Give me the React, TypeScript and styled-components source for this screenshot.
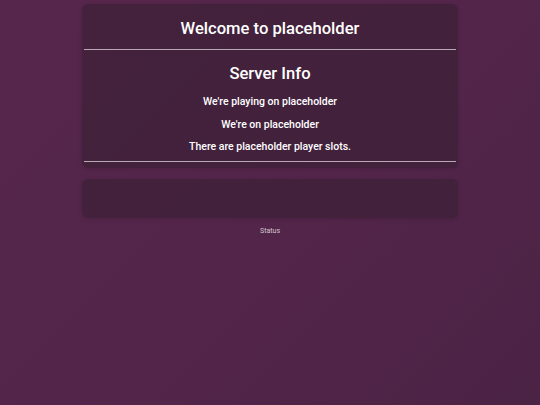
import React from "react";
import styled, { createGlobalStyle } from "styled-components";

const GlobalStyle = createGlobalStyle`
  html, body {
    margin: 0;
    padding: 0;
  }
  body {
    font-family: Roboto, "Open Sans", "DejaVu Sans", sans-serif;
    background: linear-gradient(135deg, #57264c 0%, #53254a 50%, #4b2345 100%);
    min-height: 405px;
    color: #ffffff;
  }
`;

const Page = styled.div`
  width: 376px;
  margin: 0 auto;
  padding-top: 4px;
  display: flex;
  flex-direction: column;
  gap: 11px;
`;

const Card = styled.section<{ $minHeight?: number }>`
  background: rgba(50, 30, 45, 0.5);
  border-radius: 6px;
  box-shadow: 0 1px 4px rgba(0, 0, 0, 0.12);
  padding: 0 2px 6px;
  min-height: ${({ $minHeight }) => ($minHeight ? `${$minHeight}px` : "auto")};
  box-sizing: border-box;
`;

const Heading = styled.h1<{ $top: number; $bottom: number }>`
  margin: 0;
  padding: ${({ $top, $bottom }) => `${$top}px 0 ${$bottom}px`};
  font-size: 16.6px;
  font-weight: 500;
  line-height: 25px;
  text-align: center;
`;

const Rule = styled.hr`
  margin: 0;
  border: 0;
  height: 1px;
  background: #b9a8b5;
`;

const Lines = styled.div`
  display: flex;
  flex-direction: column;
  padding-bottom: 2px;
`;

const Line = styled.p`
  margin: 0;
  font-size: 10.5px;
  font-weight: 500;
  line-height: 22.5px;
  text-align: center;
`;

const Status = styled.div`
  text-align: center;
  font-size: 7px;
  color: #d4c5d0;
  margin-top: -2px;
`;

export default function App() {
  return (
    <>
      <GlobalStyle />
      <Page>
        <Card>
          <Heading $top={12} $bottom={8}>
            Welcome to placeholder
          </Heading>
          <Rule />
          <Heading $top={11} $bottom={5}>
            Server Info
          </Heading>
          <Lines>
            <Line>We're playing on placeholder</Line>
            <Line>We're on placeholder</Line>
            <Line>There are placeholder player slots.</Line>
          </Lines>
          <Rule />
        </Card>
        <Card $minHeight={39} />
        <Status>Status</Status>
      </Page>
    </>
  );
}
